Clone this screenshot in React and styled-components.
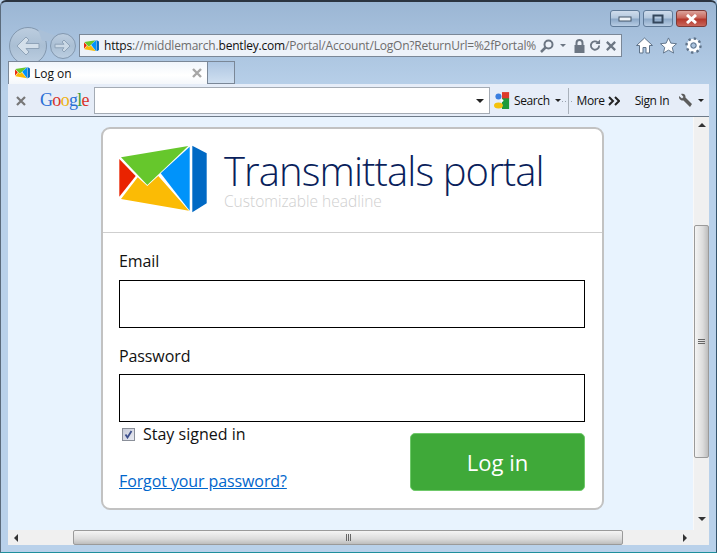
import styled, { createGlobalStyle } from "styled-components";

const Global = createGlobalStyle`
    html, body { margin: 0; padding: 0; background: #b9d1ea; }
    * { box-sizing: border-box; }
`;

const Icon = styled.svg`
    display: block;
    flex: none;
    margin-left: ${(p) => p.$left || 0}px;
`;

const Logo = ({ size = 88 }) => (
    <Icon width={size} height={size * 68 / 88} viewBox="0 0 88 68">
        <polygon points="2,12.3 69.3,1 28.3,40" fill="#66c72c" />
        <polygon points="0.3,14 16.7,31 0.3,51.7" fill="#ea2300" />
        <polygon points="2,54 18.7,32.3 28.3,41 39.3,31 70,65.7" fill="#fbbb05" />
        <polygon points="41.7,28.3 70.7,1.7 70.7,65.7" fill="#0093fa" />
        <polygon points="73.3,0.7 87.7,8.3 87.7,58.3 73.3,67.3" fill="#0069c4" />
    </Icon>
);

const Window = styled.div`
    width: 717px;
    height: 553px;
    display: flex;
    flex-direction: column;
    overflow: hidden;
    font-family: "Open Sans", "Noto Sans", sans-serif;
    background: linear-gradient(#9bb6d4 0, #b9d1ea 90px);
    border-top: 2px solid #2b3440;
    border-left: 1px solid #5b6b7c;
    border-right: 1px solid #34536b;
    border-bottom: 1px solid #1f8f9c;
    border-radius: 6px 6px 0 0;
`;

const TitleBar = styled.div`
    height: 28px;
    flex: none;
    display: flex;
    justify-content: flex-end;
    align-items: flex-start;
    padding: 8px 9px 0 0;
    gap: 3px;
`;

const Caption = styled.div`
    width: ${(p) => (p.$close ? 31 : 30)}px;
    height: 17px;
    border: 1px solid ${(p) => (p.$close ? "#7d3a36" : "#5f7a98")};
    border-radius: 3px;
    display: flex;
    align-items: center;
    justify-content: center;
    background: ${(p) =>
        p.$close
            ? "linear-gradient(#dba39c 0, #c9675c 45%, #b5382c 55%, #c8655a 100%)"
            : "linear-gradient(#cfdcec 0, #b4c8de 45%, #8da9c8 55%, #b7cce3 100%)"};
`;

const NavBar = styled.div`
    height: 31px;
    flex: none;
    display: flex;
    align-items: center;
    padding-left: 8px;
`;

const BigRound = styled.div`
    position: relative;
    width: 38px;
    height: 38px;
    flex: none;
    margin-top: 1px;
    border-radius: 50%;
    border: 1px solid #8398af;
    background: linear-gradient(#bccddf 0, #aabfd4 50%, #bccee1 100%);
    display: flex;
    align-items: center;
    justify-content: center;

    &::after {
        content: "";
        position: absolute;
        left: 28px;
        top: 1px;
        width: 20px;
        height: 12px;
        background: #aac0d8;
        clip-path: polygon(0 0, 100% 65%, 60% 100%, 20% 100%);
    }
`;

const SmallRound = styled.div`
    position: relative;
    z-index: 1;
    width: 26px;
    height: 26px;
    flex: none;
    margin: 1px 3px 0 3px;
    border-radius: 50%;
    border: 1px solid #8398af;
    background: linear-gradient(#bccddf 0, #aabfd4 50%, #bccee1 100%);
    display: flex;
    align-items: center;
    justify-content: center;
`;

const Address = styled.div`
    width: 543px;
    height: 23px;
    flex: none;
    display: flex;
    align-items: center;
    padding-left: 4px;
    background: #edf2f9;
    border: 1px solid #7a8797;
    font-size: 12px;
    letter-spacing: -0.2px;
    white-space: nowrap;
    overflow: hidden;
`;

const UrlText = styled.div`
    margin-left: 5px;
    width: 436px;
    flex: none;
    color: #6d6d6d;
`;

const UrlStrong = styled.span`
    color: #101010;
`;

const AddressIcons = styled.div`
    display: flex;
    align-items: center;
    gap: 4px;
`;

const ToolIcons = styled.div`
    display: flex;
    align-items: center;
    gap: 7px;
    margin-left: 14px;
`;

const TabStrip = styled.div`
    position: relative;
    height: 23px;
    flex: none;
    display: flex;
    padding-left: 7px;
`;

const Tab = styled.div`
    width: 200px;
    height: 23px;
    display: flex;
    align-items: center;
    padding: 0 5px 0 6px;
    font-size: 12px;
    color: #111;
    background: linear-gradient(#f0f5fb 0, #ffffff 60%, #f4f7fb 100%);
    border: 1px solid #7a8797;
    border-bottom: none;
`;

const TabTitle = styled.span`
    flex: 1;
    margin-left: 4px;
`;

const NewTab = styled.div`
    width: 27px;
    height: 23px;
    background: linear-gradient(#aec6e2 0, #cfdff0 100%);
    border: 1px solid #7a8797;
    border-left: none;
`;

const CommandBar = styled.div`
    height: 33px;
    flex: none;
    margin: 0 7px;
    display: flex;
    align-items: center;
    font-size: 12px;
    letter-spacing: -0.4px;
    color: #111;
    background: #e6edf8;
    border-bottom: 1px solid #6e7a88;
    padding: 1px 0 0 8px;
`;

const GoogleWord = styled.div`
    margin-left: 14px;
    font-family: "Liberation Serif", serif;
    font-size: 18px;
    letter-spacing: -0.7px;
    width: 54px;
    flex: none;
`;

const Letter = styled.span`
    color: ${(p) => p.$c};
`;

const SearchBox = styled.div`
    width: 396px;
    height: 27px;
    flex: none;
    background: #fff;
    border: 1px solid #a4abb4;
    display: flex;
    align-items: center;
    justify-content: flex-end;
    padding-right: 5px;
`;

const Caret = styled.div`
    width: 0;
    height: 0;
    flex: none;
    margin-left: ${(p) => p.$left || 0}px;
    border-left: ${(p) => p.$w || 3}px solid transparent;
    border-right: ${(p) => p.$w || 3}px solid transparent;
    border-top: ${(p) => p.$w || 3}px solid ${(p) => p.$color || "#222"};
`;

const CmdText = styled.span`
    margin-left: ${(p) => p.$left || 0}px;
    flex: none;
`;

const Sep = styled.div`
    position: relative;
    width: 1px;
    height: 26px;
    margin-left: 7px;
    background: #a9b1bb;
    flex: none;

    &::before {
        content: "";
        position: absolute;
        top: 13px;
        left: -3px;
        width: 1px;
        height: 1px;
        background: #9aa4b0;
        box-shadow: -3px 0 #9aa4b0, 6px 0 #9aa4b0;
    }
`;

const Body = styled.div`
    flex: 1;
    min-height: 0;
    margin: 0 7px;
    display: flex;
`;

const Page = styled.div`
    flex: 1;
    background: #e8f3fe;
    padding: 10px 0 0 93px;
`;

const Card = styled.div`
    width: 503px;
    height: 383px;
    background: #fff;
    border: 2px solid #c2c2c2;
    border-radius: 9px;
    display: flex;
    flex-direction: column;
`;

const CardHead = styled.div`
    height: 104px;
    flex: none;
    display: flex;
    padding: 16px 0 0 16px;
    border-bottom: 1px solid #cfcfcf;
`;

const Brand = styled.div`
    margin-left: 17px;
`;

const Title = styled.div`
    font-size: 40px;
    font-weight: 300;
    line-height: 40px;
    color: #0a1f5c;
    letter-spacing: -0.9px;
    margin-top: 6px;
`;

const Subtitle = styled.div`
    font-size: 15.5px;
    font-weight: 300;
    line-height: 18px;
    margin-top: 1px;
    color: #cfcfcf;
`;

const CardBody = styled.div`
    flex: 1;
    padding: 16px 17px 0 16px;
`;

const Label = styled.div`
    font-size: 16px;
    line-height: 24px;
    letter-spacing: -0.1px;
    color: #111;
`;

const Field = styled.input`
    display: block;
    width: 466px;
    height: 48px;
    margin: ${(p) => p.$before || 7}px 0 ${(p) => p.$after || 0}px;
    border: 1px solid #000;
    background: #fff;
    outline: none;
`;

const Bottom = styled.div`
    display: flex;
    justify-content: space-between;
    align-items: flex-start;
`;

const Remember = styled.label`
    display: flex;
    align-items: center;
    font-size: 16px;
    line-height: 24px;
    color: #111;
    padding-left: 3px;
`;

const Box = styled.div`
    width: 13px;
    height: 13px;
    border: 1px solid #8a8f99;
    background: linear-gradient(135deg, #c8cbd8, #e8eaf2);
    margin-right: 8px;
    display: flex;
    align-items: center;
    justify-content: center;
`;

const Forgot = styled.a`
    display: block;
    margin-top: 23px;
    font-size: 16px;
    line-height: 24px;
    letter-spacing: -0.1px;
    color: #0066cc;
    text-decoration: underline;
`;

const LogIn = styled.button`
    width: 175px;
    height: 58px;
    margin-top: 11px;
    background: #3fa939;
    color: #fff;
    border: 1px solid #6fc96a;
    border-radius: 5px;
    font-family: inherit;
    font-size: 22px;
`;

const VScroll = styled.div`
    width: 16px;
    flex: none;
    background: #f0f0f0;
    display: flex;
    flex-direction: column;
    align-items: center;
    border-left: 1px solid #f8f8f8;
`;

const Thumb = styled.div`
    flex: none;
    border: 1px solid #9a9a9a;
    border-radius: 2px;
    display: flex;
    align-items: center;
    justify-content: center;
`;

const VThumb = styled(Thumb)`
    width: 15px;
    height: 233px;
    margin-top: 98px;
    background: linear-gradient(90deg, #f4f4f4, #dcdcdc 60%, #bdbdbd);
`;

const ArrowUp = styled.div`
    margin-top: 6px;
    width: 0;
    height: 0;
    border-left: 4px solid transparent;
    border-right: 4px solid transparent;
    border-bottom: 4px solid #333;
`;

const ArrowDown = styled.div`
    margin-top: auto;
    margin-bottom: 9px;
    width: 0;
    height: 0;
    border-left: 4px solid transparent;
    border-right: 4px solid transparent;
    border-top: 4px solid #333;
`;

const HScroll = styled.div`
    height: 15px;
    flex: none;
    margin: 0 7px 7px;
    display: flex;
    align-items: center;
    background: #f0f0f0;
`;

const ArrowLeftTri = styled.div`
    margin-left: 6px;
    width: 0;
    height: 0;
    border-top: 4px solid transparent;
    border-bottom: 4px solid transparent;
    border-right: 4px solid #333;
`;

const ArrowRightTri = styled.div`
    margin-left: 60px;
    width: 0;
    height: 0;
    border-top: 4px solid transparent;
    border-bottom: 4px solid transparent;
    border-left: 4px solid #333;
`;

const HThumb = styled(Thumb)`
    width: 550px;
    height: 15px;
    margin-left: 55px;
    background: linear-gradient(#f4f4f4, #dcdcdc 60%, #bdbdbd);
`;

const Grip = styled.div`
    width: ${(p) => (p.$v ? 7 : 5)}px;
    height: ${(p) => (p.$v ? 5 : 7)}px;
    border: solid #666;
    border-width: ${(p) => (p.$v ? "1px 0" : "0 1px")};
    background: ${(p) =>
        p.$v
            ? "linear-gradient(transparent 40%, #666 40%, #666 60%, transparent 60%)"
            : "linear-gradient(90deg, transparent 40%, #666 40%, #666 60%, transparent 60%)"};
`;

const Corner = styled.div`
    width: 16px;
    height: 15px;
    margin-left: auto;
    background: #f0f0f0;
`;

const App = () => {
    const iconStroke = { fill: "none", stroke: "#6c7683", strokeWidth: 2 };
    return (
        <Window>
            <Global />
            <TitleBar>
                <Caption>
                    <svg width="14" height="6"><rect x="1" y="1" width="12" height="4" fill="#eef3f8" stroke="#44566b" /></svg>
                </Caption>
                <Caption>
                    <svg width="12" height="10"><rect x="1.5" y="1.5" width="9" height="7" fill="none" stroke="#33465c" strokeWidth="2" /></svg>
                </Caption>
                <Caption $close>
                    <svg width="13" height="10"><path d="M2 1L11 9M11 1L2 9" stroke="#fff" strokeWidth="3" /></svg>
                </Caption>
            </TitleBar>
            <NavBar>
                <BigRound>
                    <Icon width="26" height="22" viewBox="0 0 26 22">
                        <path d="M24 8.500H11L14 5L11 2L2 11L11 20L14 17L11 13.500H24Z" fill="#d3dfea" stroke="#8fa3b8" strokeLinejoin="round" />
                    </Icon>
                </BigRound>
                <SmallRound>
                    <Icon width="18" height="16" viewBox="0 0 18 16">
                        <path d="M1 6.200H10L8 4L10 2L16 8L10 14L8 12L10 9.800H1Z" fill="#cbd9e6" stroke="#8fa3b8" strokeLinejoin="round" />
                    </Icon>
                </SmallRound>
                <Address>
                    <Logo size={15} />
                    <UrlText>
                        <UrlStrong>https</UrlStrong>://middlemarch.<UrlStrong>bentley.com</UrlStrong>/Portal/Account/LogOn?ReturnUrl=%2fPortal%
                    </UrlText>
                    <AddressIcons>
                        <Icon width="14" height="14" viewBox="0 0 14 14"><circle cx="8.500" cy="5.500" r="4" {...iconStroke} /><path d="M5.500 8.500L1 13" {...iconStroke} strokeWidth="2.500" /></Icon>
                        <Caret $left={2} $color="#6c7683" />
                        <Icon width="11" height="14" viewBox="0 0 11 14" $left={4}><rect x="0.500" y="6" width="10" height="8" fill="#6c7683" /><path d="M2.500 6V4a3 3 0 0 1 6 0v2" {...iconStroke} /></Icon>
                        <Icon width="12" height="13" viewBox="0 0 13 13"><path d="M11 6.500a4.500 4.500 0 1 1-1.400-3.200" {...iconStroke} /><path d="M12 0v5H7z" fill="#6c7683" /></Icon>
                        <Icon width="12" height="12" viewBox="0 0 13 13"><path d="M2 2L11 11M11 2L2 11" {...iconStroke} strokeWidth="2.400" /></Icon>
                    </AddressIcons>
                </Address>
                <ToolIcons>
                    <Icon width="17" height="17" viewBox="0 0 17 17"><path d="M8.500 1L16.500 8.500H13.500V16H10V10.500H7V16H3.500V8.500H0.500Z" fill="#fff" stroke="#5f7389" /></Icon>
                    <Icon width="17" height="17" viewBox="0 0 18 17"><path d="M9 0.500L11.500 6L17.500 6.600L13 10.600L14.400 16.500L9 13.400L3.600 16.500L5 10.600L0.500 6.600L6.500 6Z" fill="#fff" stroke="#5f7389" /></Icon>
                    <Icon width="17" height="17" viewBox="0 0 17 17" $left={1}><circle cx="8.500" cy="8.500" r="5" fill="none" stroke="#fff" strokeWidth="3.400" /><circle cx="8.500" cy="8.500" r="7" fill="none" stroke="#5f7389" strokeWidth="2.400" strokeDasharray="2.400 3.100" /><circle cx="8.500" cy="8.500" r="2.600" fill="none" stroke="#5f7389" /></Icon>
                </ToolIcons>
            </NavBar>
            <TabStrip>
                <Tab>
                    <Logo size={15} />
                    <TabTitle>Log on</TabTitle>
                    <svg width="10" height="10"><path d="M1 1L9 9M9 1L1 9" stroke="#a6a6a6" strokeWidth="2.400" /></svg>
                </Tab>
                <NewTab />
            </TabStrip>
            <CommandBar>
                <Icon width="10" height="10"><path d="M1 1L9 9M9 1L1 9" stroke="#777" strokeWidth="2.200" /></Icon>
                <GoogleWord>
                    <Letter $c="#2a6fd6">G</Letter>
                    <Letter $c="#d9332a">o</Letter>
                    <Letter $c="#eeb211">o</Letter>
                    <Letter $c="#2a6fd6">g</Letter>
                    <Letter $c="#3c9b3c">l</Letter>
                    <Letter $c="#d9332a">e</Letter>
                </GoogleWord>
                <SearchBox><Caret $w={4} /></SearchBox>
                <Icon width="16" height="18" viewBox="0 0 18 20" $left={4}>
                    <rect x="9" y="0" width="8" height="8" fill="#dd3a2a" />
                    <rect x="9" y="7" width="8" height="12" fill="#1f9a3a" />
                    <circle cx="5" cy="5" r="3.400" fill="#3a7fe0" />
                    <ellipse cx="5" cy="15" rx="5" ry="3.400" fill="#f4c20d" />
                    <circle cx="9" cy="9.500" r="1.600" fill="#fff" />
                </Icon>
                <CmdText $left={4}>Search</CmdText>
                <Caret $left={5} />
                <Sep />
                <CmdText $left={8}>More</CmdText>
                <Icon width="12" height="10" viewBox="0 0 12 10" $left={3}><path d="M1 1L5 5L1 9M7 1L11 5L7 9" fill="none" stroke="#222" strokeWidth="2" /></Icon>
                <CmdText $left={15}>Sign In</CmdText>
                <Icon width="15" height="15" viewBox="0 0 15 15" $left={9}><path d="M1 3L4 5.500L5.500 4L3 1C5.500 0 8 1.500 7.500 4.500L14 11L12 14L5.500 7.500C3 8 0.500 6 1 3Z" fill="#5c5c5c" /></Icon>
                <Caret $left={5} />
            </CommandBar>
            <Body>
                <Page>
                    <Card>
                        <CardHead>
                            <Logo />
                            <Brand>
                                <Title>Transmittals portal</Title>
                                <Subtitle>Customizable headline</Subtitle>
                            </Brand>
                        </CardHead>
                        <CardBody>
                            <Label>Email</Label>
                            <Field type="text" $after={16} />
                            <Label>Password</Label>
                            <Field type="password" $before={6} />
                            <Bottom>
                                <div>
                                    <Remember>
                                        <Box>
                                            <svg width="9" height="9" viewBox="0 0 9 9"><path d="M1.500 4.500L3.500 7.500L7.500 1" fill="none" stroke="#3d4f8c" strokeWidth="1.800" /></svg>
                                        </Box>
                                        Stay signed in
                                    </Remember>
                                    <Forgot href="#">Forgot your password?</Forgot>
                                </div>
                                <LogIn type="button">Log in</LogIn>
                            </Bottom>
                        </CardBody>
                    </Card>
                </Page>
                <VScroll>
                    <ArrowUp />
                    <VThumb><Grip $v /></VThumb>
                    <ArrowDown />
                </VScroll>
            </Body>
            <HScroll>
                <ArrowLeftTri />
                <HThumb><Grip /></HThumb>
                <ArrowRightTri />
                <Corner />
            </HScroll>
        </Window>
    );
};

export default App;
